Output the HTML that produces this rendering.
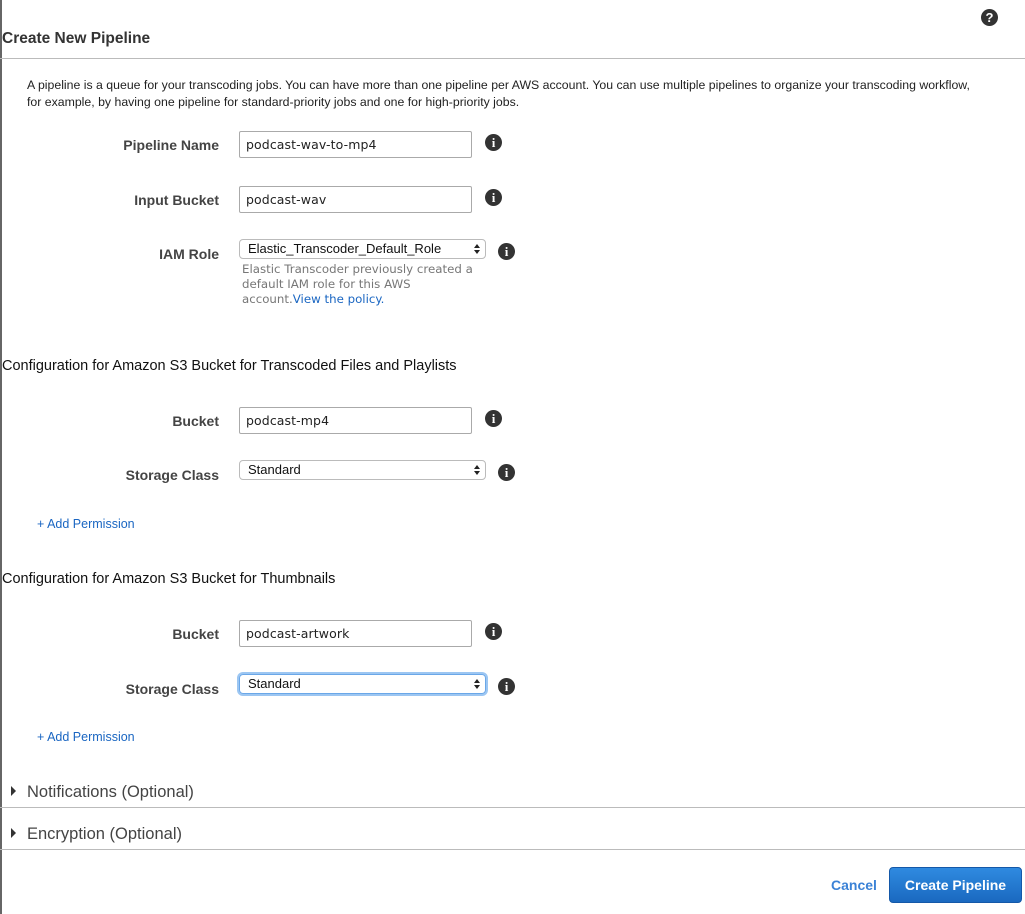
<!DOCTYPE html>
<html><head><style>
body{margin:0;width:1025px;height:914px;background:#fff;font-family:"Liberation Sans",sans-serif;color:#333;position:relative;overflow:hidden}
.a{position:absolute}
.lbl{position:absolute;right:806px;font-size:14px;font-weight:bold;color:#444;white-space:nowrap}
.inp{position:absolute;left:239px;width:233px;height:27px;border:1px solid #aaa;border-radius:2px;box-sizing:border-box;font-size:12.5px;line-height:25px;padding-left:6px;color:#222;font-family:"DejaVu Sans",sans-serif;letter-spacing:0.1px}
.sel{position:absolute;left:239px;width:247px;height:20px;border:1px solid #bbb;border-radius:4px;box-sizing:border-box;font-size:13px;line-height:18px;padding-left:8px;color:#111}
.sel:after{content:"";position:absolute;right:5px;top:4px;border-left:3px solid transparent;border-right:3px solid transparent;border-bottom:4px solid #222}
.sel:before{content:"";position:absolute;right:5px;top:10px;border-left:3px solid transparent;border-right:3px solid transparent;border-top:4px solid #222}
.i{position:absolute;width:17px;height:17px;border-radius:50%;background:#333;color:#fff;font:bold 13px/17px "Liberation Serif",serif;text-align:center}
.h{position:absolute;left:2px;font-size:14.5px;color:#111}
.lnk{position:absolute;left:37px;font-size:12.5px;color:#1a66c2}
.hr{position:absolute;left:0;width:1025px;height:1px;background:#bbb}
.tri{position:absolute;left:11px;border-top:5px solid transparent;border-bottom:5px solid transparent;border-left:5px solid #333}
.sec{position:absolute;left:27px;font-size:16.5px;color:#444}
</style></head><body>
<div class="a" style="left:0;top:0;width:2px;height:914px;background:#666"></div>
<div class="a" style="left:981px;top:9px;width:17px;height:17px;border-radius:50%;background:#333;color:#fff;font:bold 13px/17px 'Liberation Sans',sans-serif;text-align:center">?</div>
<div class="a" style="left:2px;top:30px;font-size:15.5px;font-weight:bold;color:#333">Create New Pipeline</div>
<div class="hr" style="top:58px"></div>
<div class="a" style="left:27px;top:77px;font-size:12.3px;line-height:17px;color:#222;width:960px">A pipeline is a queue for your transcoding jobs. You can have more than one pipeline per AWS account. You can use multiple pipelines to organize your transcoding workflow, for example, by having one pipeline for standard-priority jobs and one for high-priority jobs.</div>

<div class="lbl" style="top:137px">Pipeline Name</div>
<div class="inp" style="top:131px">podcast-wav-to-mp4</div>
<div class="i" style="left:485px;top:134px">i</div>

<div class="lbl" style="top:192px">Input Bucket</div>
<div class="inp" style="top:186px">podcast-wav</div>
<div class="i" style="left:485px;top:189px">i</div>

<div class="lbl" style="top:246px">IAM Role</div>
<div class="sel" style="top:239px">Elastic_Transcoder_Default_Role</div>
<div class="i" style="left:498px;top:243px">i</div>
<div class="a" style="left:242px;top:262px;font-size:11.8px;line-height:15px;color:#777;width:235px;font-family:'DejaVu Sans',sans-serif">Elastic Transcoder previously created a default IAM role for this AWS account.<span style="color:#1a66c2">View the policy.</span></div>

<div class="h" style="top:358px">Configuration for Amazon S3 Bucket for Transcoded Files and Playlists</div>
<div class="lbl" style="top:413px">Bucket</div>
<div class="inp" style="top:407px">podcast-mp4</div>
<div class="i" style="left:485px;top:410px">i</div>
<div class="lbl" style="top:467px">Storage Class</div>
<div class="sel" style="top:460px">Standard</div>
<div class="i" style="left:498px;top:464px">i</div>
<div class="lnk" style="top:517px">+ Add Permission</div>

<div class="h" style="top:571px">Configuration for Amazon S3 Bucket for Thumbnails</div>
<div class="lbl" style="top:626px">Bucket</div>
<div class="inp" style="top:620px">podcast-artwork</div>
<div class="i" style="left:485px;top:623px">i</div>
<div class="lbl" style="top:681px">Storage Class</div>
<div class="sel" style="top:674px;border-color:#6aa7e8;box-shadow:0 0 0 2px #9cc6f2">Standard</div>
<div class="i" style="left:498px;top:678px">i</div>
<div class="lnk" style="top:730px">+ Add Permission</div>

<div class="tri" style="top:786px"></div>
<div class="sec" style="top:783px">Notifications (Optional)</div>
<div class="hr" style="top:807px"></div>
<div class="tri" style="top:828px"></div>
<div class="sec" style="top:825px">Encryption (Optional)</div>
<div class="hr" style="top:849px"></div>

<div class="a" style="left:831px;top:877px;font-size:14px;font-weight:bold;color:#3b82d6">Cancel</div>
<div class="a" style="left:889px;top:867px;width:133px;height:36px;border-radius:4px;background:linear-gradient(#2f8ae0,#1a69c0);border:1px solid #1458a8;box-sizing:border-box;color:#fff;font-size:14px;font-weight:bold;text-align:center;line-height:34px">Create Pipeline</div>
</body></html>
